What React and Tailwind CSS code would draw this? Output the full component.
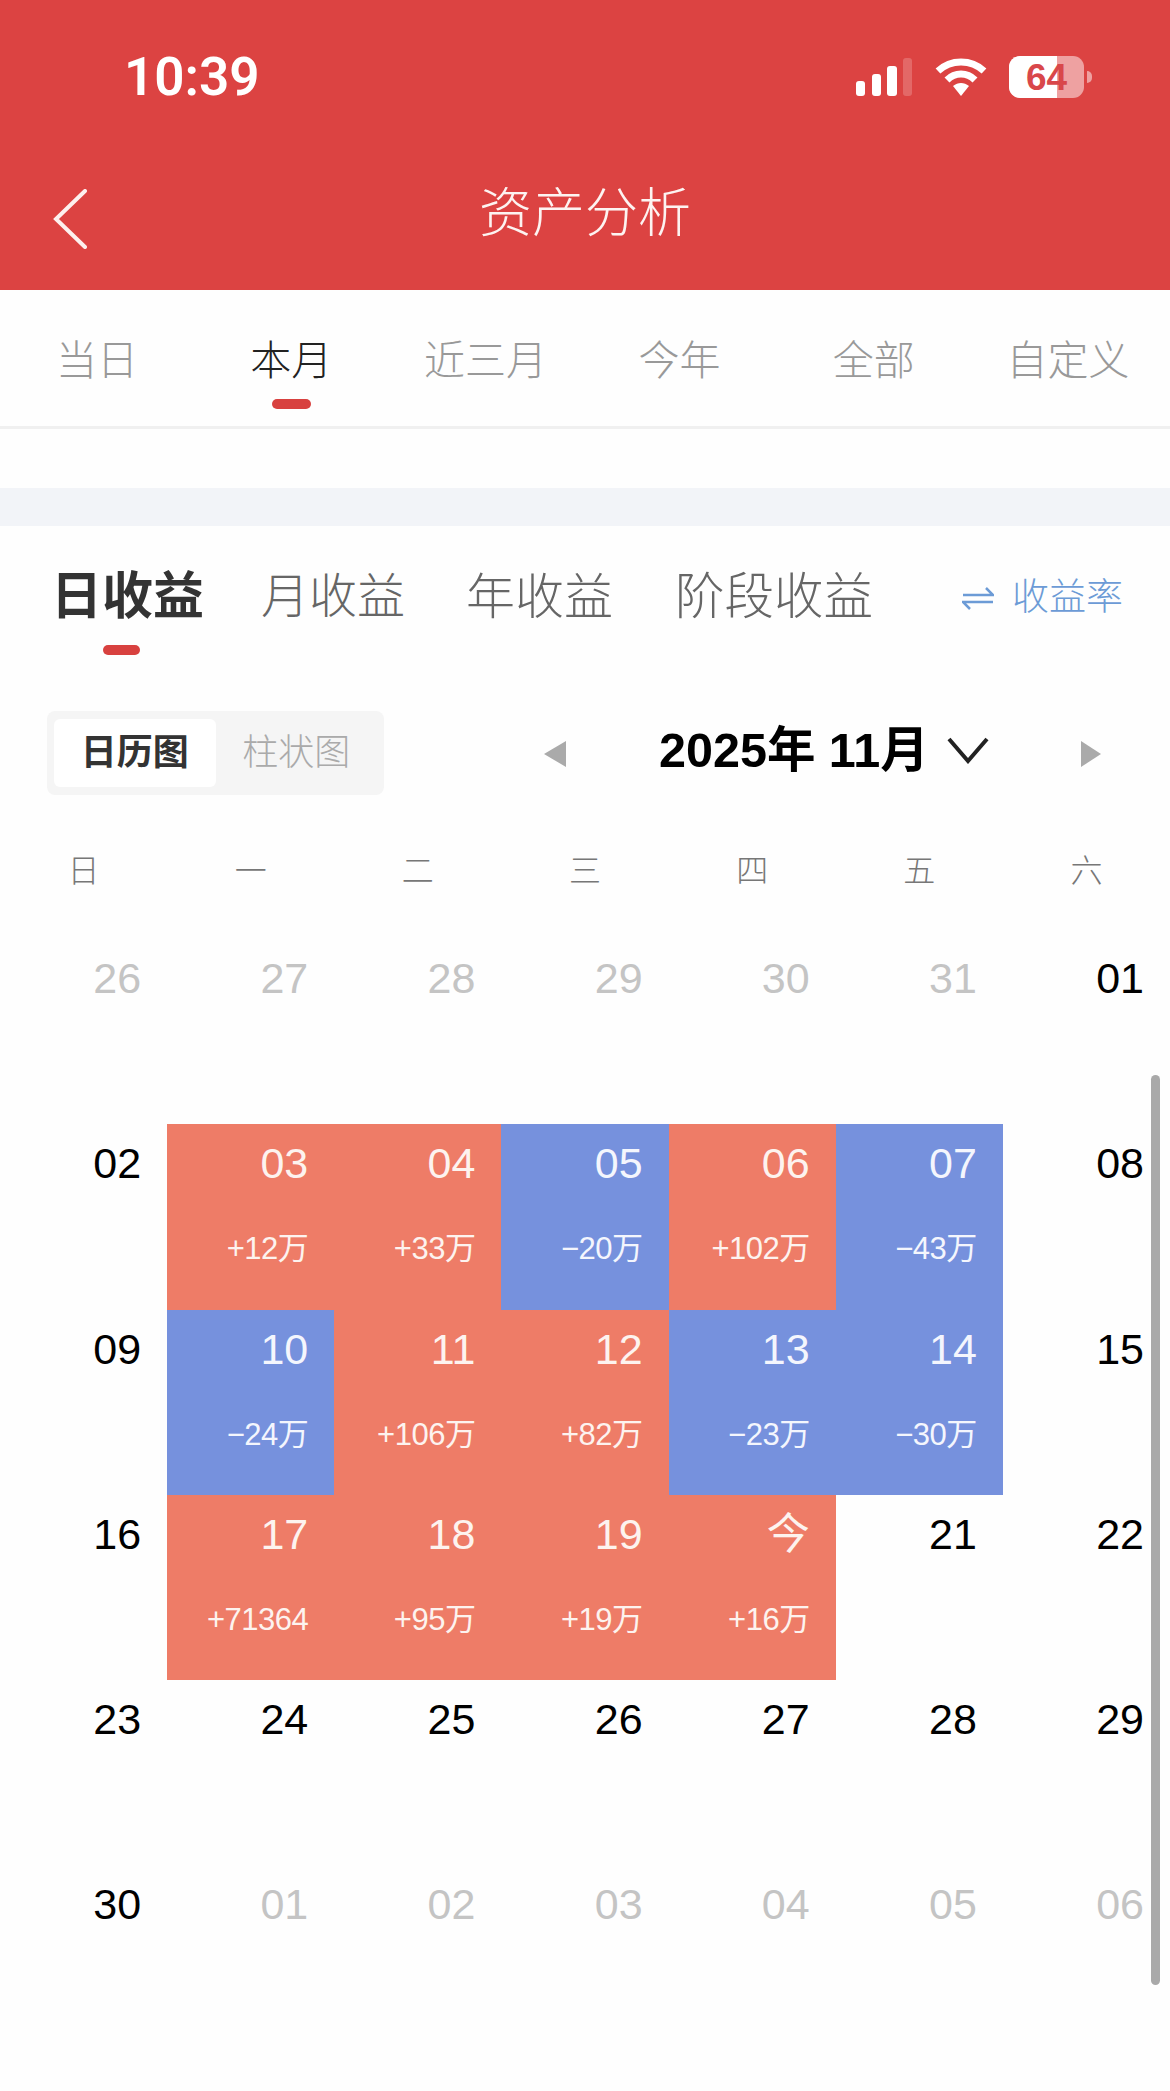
import React from "react";

const cjk = "font-['Liberation_Sans','Noto_Sans_CJK_SC',sans-serif]";

const topTabs = ["当日", "本月", "近三月", "今年", "全部", "自定义"];
const weekDays = ["日", "一", "二", "三", "四", "五", "六"];

// type: m = other month, r = gain, b = loss, plain = current month without data
const days = [
  { d: "26", t: "m" }, { d: "27", t: "m" }, { d: "28", t: "m" }, { d: "29", t: "m" }, { d: "30", t: "m" }, { d: "31", t: "m" }, { d: "01" },
  { d: "02" }, { d: "03", t: "r", v: "+12万" }, { d: "04", t: "r", v: "+33万" }, { d: "05", t: "b", v: "−20万" }, { d: "06", t: "r", v: "+102万" }, { d: "07", t: "b", v: "−43万" }, { d: "08" },
  { d: "09" }, { d: "10", t: "b", v: "−24万" }, { d: "11", t: "r", v: "+106万" }, { d: "12", t: "r", v: "+82万" }, { d: "13", t: "b", v: "−23万" }, { d: "14", t: "b", v: "−30万" }, { d: "15" },
  { d: "16" }, { d: "17", t: "r", v: "+71364" }, { d: "18", t: "r", v: "+95万" }, { d: "19", t: "r", v: "+19万" }, { d: "今", t: "r", v: "+16万" }, { d: "21" }, { d: "22" },
  { d: "23" }, { d: "24" }, { d: "25" }, { d: "26" }, { d: "27" }, { d: "28" }, { d: "29" },
  { d: "30" }, { d: "01", t: "m" }, { d: "02", t: "m" }, { d: "03", t: "m" }, { d: "04", t: "m" }, { d: "05", t: "m" }, { d: "06", t: "m" },
];

const cellStyles = {
  r: "bg-[#ee7c67] text-[#fdf3ef]",
  b: "bg-[#7691dd] text-[#f4f6fd]",
  m: "text-[#c4c4c4]",
};

const StatusBar = () => (
  <div className="h-[154px] flex items-center pl-[124px] pr-[78px] text-white">
    <span className="text-[53px] font-semibold leading-none font-['Roboto',sans-serif]">10:39</span>
    <div className="ml-auto flex items-center">
      <svg width="56" height="38" viewBox="0 0 56 38" fill="#fff">
        <rect x="0" y="23" width="9" height="15" rx="3" />
        <rect x="16" y="16" width="9" height="22" rx="3" />
        <rect x="31" y="8" width="10" height="30" rx="3" />
        <rect x="47" y="0" width="9" height="38" rx="3" fillOpacity="0.2" />
      </svg>
      <svg className="ml-[23px]" width="52" height="38" viewBox="0 0 52 38" fill="none" stroke="#fff" strokeWidth="7">
        <path d="M3 13 C16 1 36 1 49 13" />
        <path d="M12 22 C20 14 32 14 40 22" />
        <path d="M18 28 C23 24 29 24 34 28 L26 38 Z" fill="#fff" stroke="none" />
      </svg>
      <div className="ml-[22px] relative w-[75px] h-[42px] rounded-[11px] bg-white/50 overflow-hidden flex items-center justify-center">
        <div className="absolute left-0 top-0 bottom-0 w-[48px] bg-white" />
        <span className="relative text-[37px] font-bold leading-none text-[#d9474a] font-['Liberation_Sans',sans-serif]">64</span>
      </div>
      <div className="ml-[3px] w-[5px] h-[12px] rounded-r-full bg-white/50" />
    </div>
  </div>
);

export default function App() {
  return (
    <div className={`relative h-[2091px] overflow-hidden bg-[#fefefe] ${cjk}`}>
      {/* Header */}
      <header className="h-[290px] bg-[#dc4342]">
        <StatusBar />
        <div className="relative h-[116px] flex items-center justify-center">
          <svg className="absolute left-[53px] top-[35px]" width="34" height="60" viewBox="0 0 34 60" fill="none" stroke="#fdf0ee" strokeWidth="4" strokeLinecap="round">
            <path d="M32 2 L3 30 L32 58" />
          </svg>
          <span className="pt-[2px] text-[53px] leading-none text-[#fdf3f1] font-light">资产分析</span>
        </div>
      </header>

      {/* Period tabs */}
      <div className="h-[139px] border-b-[3px] border-[#f0f0f0] grid grid-cols-6 pr-[5px]">
        {topTabs.map((tab, i) => (
          <div key={tab} className="flex flex-col items-center pt-[50px]">
            <span className={`text-[41px] leading-[42px] font-light ${i === 1 ? "text-[#222]" : "text-[#999]"}`}>{tab}</span>
            {i === 1 && <div className="mt-[17px] w-[39px] h-[10px] rounded-full bg-[#d8413f]" />}
          </div>
        ))}
      </div>
      <div className="h-[59px]" />
      <div className="h-[38px] bg-[#f2f4f8]" />

      {/* Earnings tabs */}
      <div className="h-[130px] relative flex items-start pl-[51px] pt-[45px]">
        <span className="text-[51px] leading-[52px] font-bold text-[#333]">日收益</span>
        <span className="ml-[57px] text-[48px] leading-[52px] font-light text-[#666]">月收益</span>
        <span className="ml-[61px] text-[49px] leading-[52px] font-light text-[#666]">年收益</span>
        <span className="ml-[62px] text-[49.5px] leading-[52px] font-light text-[#666]">阶段收益</span>
        <div className="ml-auto mr-[47px] mt-[5px] flex items-center text-[#6c9bd6]">
          <svg width="32" height="24" viewBox="0 0 32 24" fill="none" stroke="#6c9bd6" strokeWidth="2.5">
            <path d="M1 9 H31 L24 2" />
            <path d="M31 16 H1 L8 23" />
          </svg>
          <span className="ml-[18px] text-[37px] leading-[44px] font-light">收益率</span>
        </div>
        <div className="absolute left-[103px] top-[119px] w-[37px] h-[10px] rounded-full bg-[#d8413f]" />
      </div>

      {/* Chart switch + month picker */}
      <div className="h-[139px] flex items-start pt-[55px] pl-[47px]">
        <div className="w-[337px] h-[84px] rounded-[8px] bg-[#f5f5f5] flex items-center p-[7px]">
          <div className="w-[163px] h-[68px] rounded-[6px] bg-white flex items-center justify-center text-[36px] font-bold text-[#333]">日历图</div>
          <div className="w-[163px] flex items-center justify-center text-[36px] font-light text-[#aaa]">柱状图</div>
        </div>
        <div className="ml-[160px] mt-[30px] w-0 h-0 border-y-[13px] border-y-transparent border-r-[22px] border-r-[#aaa]" />
        <span className="ml-[93px] mt-[13px] text-[48.5px] leading-[52px] font-bold text-black whitespace-nowrap">2025年 11月</span>
        <svg className="ml-[18px] mt-[25px]" width="42" height="28" viewBox="0 0 42 28" fill="none" stroke="#222" strokeWidth="4">
          <path d="M2 3 L21 25 L40 3" />
        </svg>
        <div className="ml-[92px] mt-[30px] w-0 h-0 border-y-[13px] border-y-transparent border-l-[20px] border-l-[#aaa]" />
      </div>

      {/* Calendar */}
      <div className="grid grid-cols-7 h-[144px] items-start pt-[58px]">
        {weekDays.map((w) => (
          <div key={w} className="text-center text-[32px] leading-[36px] font-light text-[#777]">{w}</div>
        ))}
      </div>
      <div className="grid grid-cols-7 auto-rows-[185.3px]">
        {days.map((c, i) => (
          <div key={i} className={`flex flex-col items-end pr-[26px] pt-[18px] ${cellStyles[c.t] || "text-black"}`}>
            <span className="text-[43px] leading-[42px]">{c.d}</span>
            {c.v && <span className="mt-[45px] text-[31px] leading-[40px] tracking-[-0.5px]">{c.v}</span>}
          </div>
        ))}
      </div>

      {/* Scroll indicator */}
      <div className="absolute left-[1151px] top-[1075px] w-[9px] h-[910px] rounded-full bg-[#a9a9a9]" />
    </div>
  );
}
